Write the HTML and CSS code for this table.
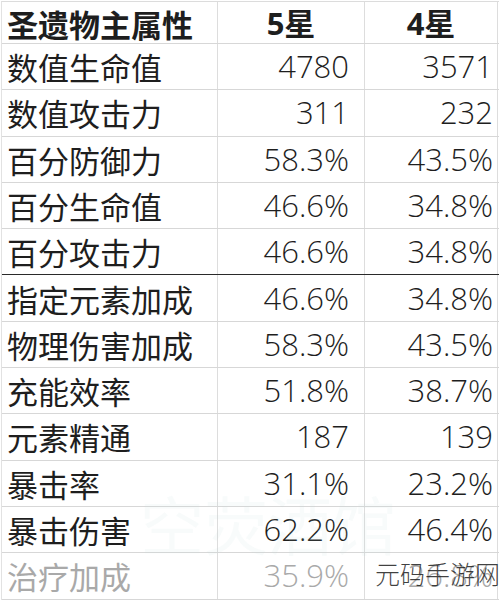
FILE: index.html
```html
<!DOCTYPE html>
<html lang="zh">
<head>
<meta charset="utf-8">
<link rel="stylesheet" href="styles.css">
</head>
<body>
<div class="sheet">
  <div class="row head"><div class="c name">圣遗物主属性</div><div class="c star">5星</div><div class="c star">4星</div></div>
  <div class="row"><div class="c name">数值生命值</div><div class="c v5">4780</div><div class="c v4">3571</div></div>
  <div class="row"><div class="c name">数值攻击力</div><div class="c v5">311</div><div class="c v4">232</div></div>
  <div class="row"><div class="c name">百分防御力</div><div class="c v5">58.3%</div><div class="c v4">43.5%</div></div>
  <div class="row"><div class="c name">百分生命值</div><div class="c v5">46.6%</div><div class="c v4">34.8%</div></div>
  <div class="row split"><div class="c name">百分攻击力</div><div class="c v5">46.6%</div><div class="c v4">34.8%</div></div>
  <div class="row"><div class="c name">指定元素加成</div><div class="c v5">46.6%</div><div class="c v4">34.8%</div></div>
  <div class="row"><div class="c name">物理伤害加成</div><div class="c v5">58.3%</div><div class="c v4">43.5%</div></div>
  <div class="row"><div class="c name">充能效率</div><div class="c v5">51.8%</div><div class="c v4">38.7%</div></div>
  <div class="row"><div class="c name">元素精通</div><div class="c v5">187</div><div class="c v4">139</div></div>
  <div class="row"><div class="c name">暴击率</div><div class="c v5">31.1%</div><div class="c v4">23.2%</div></div>
  <div class="row"><div class="c name">暴击伤害</div><div class="c v5">62.2%</div><div class="c v4">46.4%</div></div>
  <div class="row faded"><div class="c name">治疗加成</div><div class="c v5">35.9%</div><div class="c v4">26.8%</div></div>
  <div class="mark-mid">空荧酒馆</div>
  <div class="mark-site">元码手游网</div>
</div>
</body>
</html>
```

FILE: styles.css
```css
html, body {
  margin: 0;
  padding: 0;
  background: #ffffff;
  overflow: hidden;
}

.sheet {
  position: relative;
  margin: 1px 0 0 1px;
  width: 497px;
  border-top: 1px solid #dcdcdc;
  border-left: 1px solid #e2e2e2;
  font-family: "Open Sans", "Noto Sans CJK SC", sans-serif;
  font-size: 31px;
  font-weight: 300;
  color: #1e1e1e;
}

.row {
  display: grid;
  grid-template-columns: 216px 147px 133px;
  height: 46.3px;
  box-sizing: border-box;
  border-bottom: 1px solid #d7d7d7;
}

.row.head {
  height: 42px;
}

.row.split {
  border-bottom: 1px solid #2a2a2a;
}

.c {
  display: flex;
  align-items: center;
  border-right: 1px solid #dddddd;
  line-height: 1.2;
  white-space: nowrap;
}

.name {
  font-family: "Noto Sans CJK SC", sans-serif;
  font-weight: 400;
  padding-left: 5px;
}

.head .c {
  font-weight: 700;
  align-items: flex-end;
  padding-bottom: 1px;
}

.star {
  justify-content: center;
  font-family: "Noto Sans", "Noto Sans CJK SC", sans-serif;
}

.v5 {
  justify-content: flex-end;
  padding-right: 15px;
}

.v4 {
  justify-content: flex-end;
  padding-right: 4px;
}

.faded .c {
  color: #a9a9a9;
}

.mark-mid {
  position: absolute;
  left: 138px;
  top: 488px;
  font-family: "Noto Sans CJK SC", sans-serif;
  font-size: 64px;
  font-weight: 400;
  line-height: 1;
  color: rgba(190, 215, 215, 0.1);
  pointer-events: none;
}

.mark-site {
  position: absolute;
  left: 373px;
  top: 559px;
  font-family: "Noto Sans CJK SC", sans-serif;
  font-size: 25px;
  font-weight: 300;
  line-height: 1;
  color: rgba(30, 30, 30, 0.85);
  white-space: nowrap;
}
```
